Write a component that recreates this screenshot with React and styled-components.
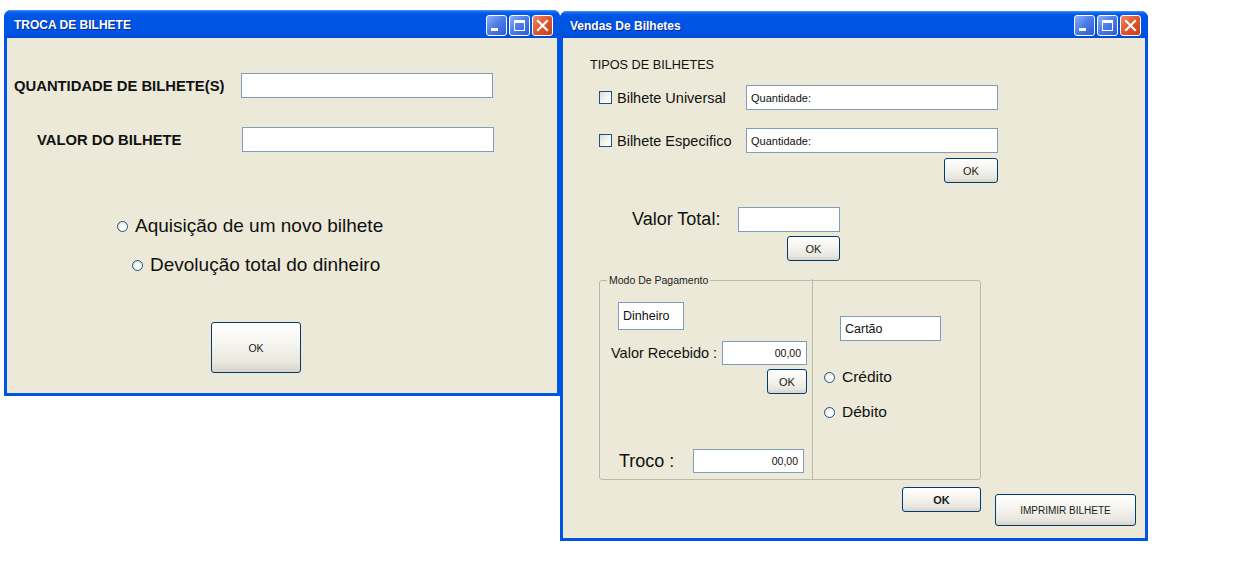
import React from 'react';
import styled, { createGlobalStyle } from 'styled-components';

const GlobalStyle = createGlobalStyle`
  body {
    margin: 0;
    background: #fff;
    font-family: 'Liberation Sans', Arial, sans-serif;
  }
`;

const Desktop = styled.div`
  position: relative;
  width: 1251px;
  height: 563px;
  background: #fff;
  overflow: hidden;
`;

const Window = styled.section`
  position: absolute;
  left: ${p => p.$x}px;
  top: ${p => p.$y}px;
  width: ${p => p.$w}px;
  height: ${p => p.$h}px;
  box-sizing: border-box;
  display: flex;
  flex-direction: column;
  padding: 0 3px 3px;
  background: #0054e3;
  border-radius: 7px 7px 0 0;
`;

const TitleBar = styled.header`
  height: ${p => p.$h}px;
  flex-shrink: 0;
  margin: 0 -3px;
  padding: 2px 7px 0 10px;
  box-sizing: border-box;
  display: flex;
  align-items: center;
  justify-content: space-between;
  border-radius: 7px 7px 0 0;
  background: linear-gradient(
    #4a96ff 0px,
    #0c63ee 2px,
    #0055e6 5px,
    #0054e3 80%,
    #0049d6 100%
  );
`;

const Title = styled.h1`
  margin: 0;
  font-size: 12px;
  font-weight: 700;
  color: #fff;
  text-shadow: 1px 1px 0 #0b2a8a;
`;

const Controls = styled.div`
  display: flex;
  gap: 2px;
`;

const CtrlButton = styled.span`
  width: 21px;
  height: 21px;
  box-sizing: border-box;
  border: 1px solid #fff;
  border-radius: 3px;
  display: flex;
  background: ${p =>
    p.$close
      ? 'linear-gradient(135deg, #ee8a66 0%, #e0552c 50%, #c83d16 100%)'
      : 'linear-gradient(135deg, #8eaff5 0%, #4f7fe6 45%, #2a5ad6 100%)'};
  svg {
    display: block;
  }
`;

const Body = styled.div`
  flex: 1;
  display: flex;
  flex-direction: column;
  align-items: flex-start;
  background: #ece9d8;
  color: #000;
`;

const FormRow = styled.div`
  display: flex;
  align-items: center;
  flex-shrink: 0;
  height: ${p => p.$h || 25}px;
  margin-top: ${p => p.$top}px;
  padding-left: ${p => p.$pl || 0}px;
`;

const BoldLabel = styled.span`
  width: ${p => p.$w}px;
  font-size: 14.8px;
  font-weight: 700;
  color: #111;
`;

const Label = styled.span`
  width: ${p => p.$w}px;
  font-size: ${p => p.$size}px;
  color: #111;
`;

const Field = styled.input`
  width: ${p => p.$w}px;
  height: ${p => p.$h || 25}px;
  box-sizing: border-box;
  margin: 0;
  padding: 0 ${p => (p.$right ? 5 : 0)}px 0 ${p => (p.$right ? 0 : 4)}px;
  border: 1px solid #7f9db9;
  background: #fff;
  font-family: 'Liberation Sans', Arial, sans-serif;
  font-size: ${p => p.$size || 11}px;
  color: #111;
  text-align: ${p => (p.$right ? 'right' : 'left')};
  outline: none;
`;

const Tag = styled.div`
  width: ${p => p.$w}px;
  height: ${p => p.$h}px;
  box-sizing: border-box;
  margin-top: ${p => p.$top}px;
  margin-left: ${p => p.$left}px;
  padding-left: 4px;
  display: flex;
  align-items: center;
  border: 1px solid #7f9db9;
  background: #fff;
  font-size: 12.5px;
  color: #111;
`;

const Button = styled.button`
  width: ${p => p.$w}px;
  height: ${p => p.$h}px;
  flex-shrink: 0;
  box-sizing: border-box;
  margin: ${p => p.$top || 0}px 0 0 ${p => p.$left || 0}px;
  padding: 0;
  border: 1px solid #003c74;
  border-radius: 3px;
  background: linear-gradient(#ffffff 0%, #f6f5f0 40%, #e9e7df 80%, #d8d3c8 100%);
  font-family: 'Liberation Sans', Arial, sans-serif;
  font-size: ${p => p.$size || 11}px;
  font-weight: ${p => (p.$bold ? 700 : 400)};
  color: #1a1a1a;
`;

const Option = styled.label`
  display: flex;
  align-items: center;
  flex-shrink: 0;
  height: ${p => p.$h || 24}px;
  margin-top: ${p => p.$top}px;
  padding-left: ${p => p.$pl}px;
  font-size: ${p => p.$size}px;
  color: #111;
`;

const Radio = styled.span`
  width: 11px;
  height: 11px;
  box-sizing: border-box;
  margin-right: 7px;
  border: 1px solid #1c5180;
  border-radius: 50%;
  background: radial-gradient(circle at 65% 65%, #fff 30%, #dcd9cd 100%);
`;

const Check = styled.span`
  width: 13px;
  height: 13px;
  box-sizing: border-box;
  margin-right: 5px;
  border: 1px solid #1c5180;
  background: linear-gradient(135deg, #dcdad0 0%, #f4f3ee 50%, #fff 100%);
`;

const CheckLabel = styled.span`
  display: flex;
  align-items: center;
  width: ${p => p.$w}px;
  font-size: 14.5px;
  color: #111;
`;

const Heading = styled.div`
  margin-top: ${p => p.$top}px;
  padding-left: ${p => p.$pl}px;
  font-size: 12.7px;
  line-height: 16px;
  color: #111;
`;

const Group = styled.div`
  position: relative;
  display: flex;
  flex-shrink: 0;
  width: 382px;
  height: 200px;
  box-sizing: border-box;
  margin: 19px 0 0 36px;
  border: 1px solid #bcb9aa;
  border-radius: 3px;
`;

const Legend = styled.span`
  position: absolute;
  top: -7px;
  left: 7px;
  padding: 0 2px;
  background: #ece9d8;
  font-size: 10.5px;
  line-height: 12px;
  color: #222;
`;

const Pane = styled.div`
  display: flex;
  flex-direction: column;
  align-items: flex-start;
  width: ${p => p.$w}px;
  box-sizing: border-box;
  border-left: ${p => (p.$divided ? '1px solid #bcb9aa' : 'none')};
  margin-top: ${p => (p.$divided ? -2 : 0)}px;
  padding-top: ${p => (p.$divided ? 2 : 0)}px;
`;

const Footer = styled.div`
  display: flex;
  align-items: flex-start;
  margin-top: 7px;
  padding-left: 339px;
`;

const WindowControls = () => (
  <Controls>
    <CtrlButton>
      <svg width="19" height="19" viewBox="0 0 19 19">
        <rect x="4" y="12" width="7" height="3" fill="#fff" />
      </svg>
    </CtrlButton>
    <CtrlButton>
      <svg width="19" height="19" viewBox="0 0 19 19">
        <rect x="4.5" y="4.5" width="10" height="10" fill="none" stroke="#fff" strokeWidth="1" />
        <rect x="4" y="4" width="11" height="3" fill="#fff" />
      </svg>
    </CtrlButton>
    <CtrlButton $close>
      <svg width="19" height="19" viewBox="0 0 19 19">
        <path d="M5 5 L14 14 M14 5 L5 14" stroke="#fff" strokeWidth="2.2" strokeLinecap="square" />
      </svg>
    </CtrlButton>
  </Controls>
);

const TrocaWindow = () => (
  <Window $x={4} $y={10} $w={556} $h={386}>
    <TitleBar $h={28}>
      <Title>TROCA DE BILHETE</Title>
      <WindowControls />
    </TitleBar>
    <Body>
      <FormRow $top={35} $pl={7}>
        <BoldLabel $w={227}>QUANTIDADE DE BILHETE(S)</BoldLabel>
        <Field $w={252} />
      </FormRow>
      <FormRow $top={29} $pl={30}>
        <BoldLabel $w={205}>VALOR DO BILHETE</BoldLabel>
        <Field $w={252} />
      </FormRow>
      <Option $top={62} $pl={110} $size={19}>
        <Radio />
        Aquisição de um novo bilhete
      </Option>
      <Option $top={15} $pl={125} $size={19}>
        <Radio />
        Devolução total do dinheiro
      </Option>
      <Button $w={90} $h={51} $top={45} $left={204} $size={10.5}>
        OK
      </Button>
    </Body>
  </Window>
);

const VendasWindow = () => (
  <Window $x={560} $y={11} $w={588} $h={530}>
    <TitleBar $h={27}>
      <Title>Vendas De Bilhetes</Title>
      <WindowControls />
    </TitleBar>
    <Body>
      <Heading $top={19} $pl={27}>TIPOS DE BILHETES</Heading>
      <FormRow $top={12} $pl={36}>
        <CheckLabel $w={147}>
          <Check />
          Bilhete Universal
        </CheckLabel>
        <Field $w={252} defaultValue="Quantidade:" readOnly />
      </FormRow>
      <FormRow $top={18} $pl={36}>
        <CheckLabel $w={147}>
          <Check />
          Bilhete Especifico
        </CheckLabel>
        <Field $w={252} defaultValue="Quantidade:" readOnly />
      </FormRow>
      <Button $w={54} $h={25} $top={5} $left={381}>
        OK
      </Button>
      <FormRow $top={24} $pl={69}>
        <Label $w={106} $size={18}>Valor Total:</Label>
        <Field $w={102} />
      </FormRow>
      <Button $w={53} $h={25} $top={4} $left={224}>
        OK
      </Button>

      <Group>
        <Legend>Modo De Pagamento</Legend>
        <Pane $w={212}>
          <Tag $w={66} $h={28} $top={21} $left={18}>Dinheiro</Tag>
          <FormRow $top={11} $pl={11} $h={24}>
            <Label $w={111} $size={14.5}>Valor Recebido :</Label>
            <Field $w={85} $h={24} $size={10.5} $right defaultValue="00,00" readOnly />
          </FormRow>
          <Button $w={40} $h={25} $top={4} $left={167}>
            OK
          </Button>
          <FormRow $top={55} $pl={19} $h={24}>
            <Label $w={74} $size={18}>Troco :</Label>
            <Field $w={111} $h={24} $size={10.5} $right defaultValue="00,00" readOnly />
          </FormRow>
        </Pane>
        <Pane $w={168} $divided>
          <Tag $w={101} $h={25} $top={35} $left={27}>Cartão</Tag>
          <Option $top={26} $pl={11} $h={20} $size={15.5}>
            <Radio />
            Crédito
          </Option>
          <Option $top={15} $pl={11} $h={20} $size={15.5}>
            <Radio />
            Débito
          </Option>
        </Pane>
      </Group>

      <Footer>
        <Button $w={79} $h={25} $bold>
          OK
        </Button>
        <Button $w={141} $h={32} $top={7} $left={14} $size={10}>
          IMPRIMIR BILHETE
        </Button>
      </Footer>
    </Body>
  </Window>
);

const App = () => (
  <>
    <GlobalStyle />
    <Desktop>
      <TrocaWindow />
      <VendasWindow />
    </Desktop>
  </>
);

export default App;
